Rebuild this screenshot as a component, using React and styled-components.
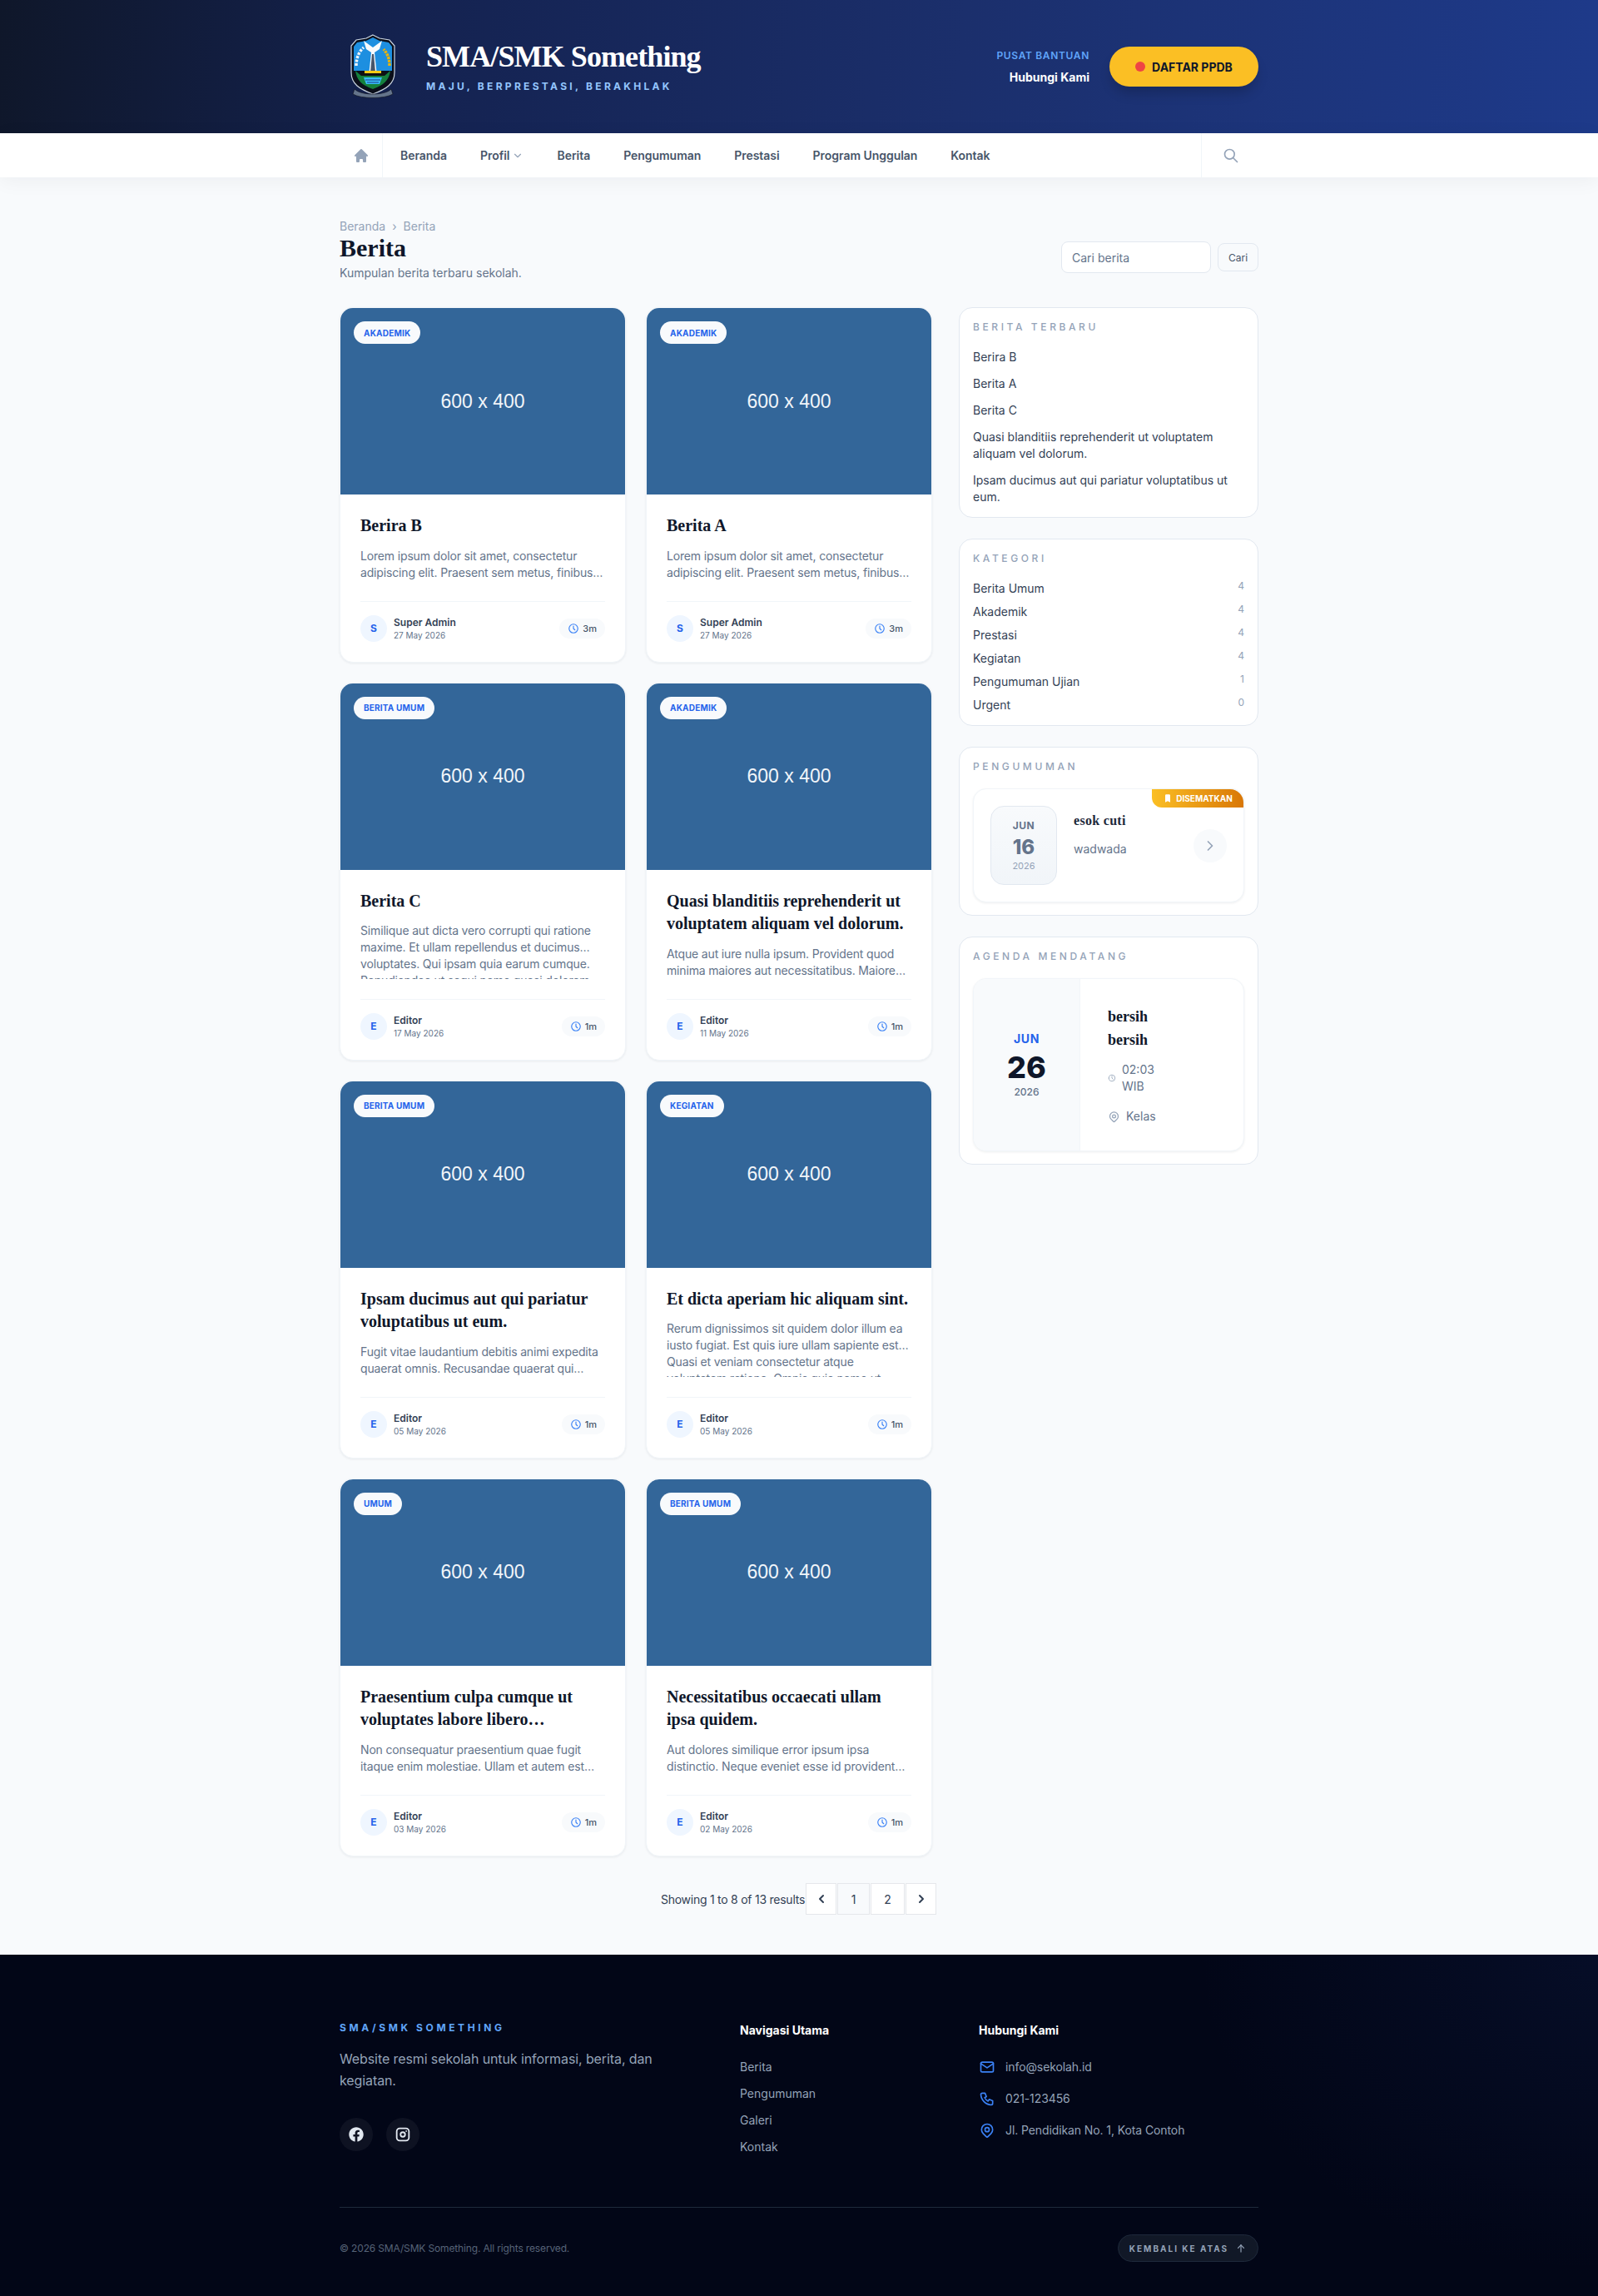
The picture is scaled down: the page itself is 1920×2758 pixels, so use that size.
import React from 'react';
import styled, { createGlobalStyle } from 'styled-components';
import { TbChevronDown, TbChevronLeft, TbChevronRight, TbSearch, TbClock, TbMapPin, TbMail, TbPhone, TbArrowUp, TbBrandInstagram } from 'react-icons/tb';
import { HiHome, HiBookmark } from 'react-icons/hi';
import { FaFacebook } from 'react-icons/fa';

const SANS = '"Inter", "Open Sans", sans-serif';
const SERIF = '"Liberation Serif", "Times New Roman", serif';

const GlobalStyle = createGlobalStyle`
  * { box-sizing: border-box; }
  html, body { margin: 0; padding: 0; }
  body { font-family: ${SANS}; background: #f8fafc; color: #0f172a; }
  a { color: inherit; text-decoration: none; }
`;

const Container = styled.div`
  width: 1104px;
  margin: 0 auto;
`;

/* top banner */
const Banner = styled.header`
  height: 160px;
  background: linear-gradient(95deg, #0f172a 0%, #14224f 25%, #1b2f6c 60%, #1e3a8a 100%);
`;
const BannerInner = styled(Container)`
  height: 100%;
  display: flex;
  align-items: center;
  justify-content: space-between;
`;
const Brand = styled.div`
  display: flex;
  align-items: center;
  gap: 24px;
`;
const LogoBox = styled.div`
  width: 80px;
  height: 80px;
  display: flex;
  align-items: center;
  justify-content: center;
`;
const BrandName = styled.div`
  font-family: ${SERIF};
  font-weight: 700;
  font-size: 36px;
  line-height: 40px;
  color: #fff;
  letter-spacing: -0.9px;
`;
const BrandTag = styled.div`
  margin-top: 8px;
  font-size: 12px;
  line-height: 16px;
  font-weight: 700;
  letter-spacing: 3.3px;
  color: #93c5fd;
`;
const BannerRight = styled.div`
  display: flex;
  align-items: center;
  gap: 24px;
`;
const Help = styled.div`
  text-align: right;
`;
const HelpLabel = styled.div`
  font-size: 12px;
  line-height: 16px;
  font-weight: 600;
  letter-spacing: 0.66px;
  color: #60a5fa;
`;
const HelpLink = styled.div`
  margin-top: 9px;
  font-size: 14px;
  line-height: 18px;
  font-weight: 700;
  color: #fff;
`;
const CtaButton = styled.a`
  height: 48px;
  width: 179px;
  border-radius: 24px;
  background: #fbbf24;
  display: flex;
  align-items: center;
  justify-content: center;
  gap: 8px;
  font-size: 14px;
  font-weight: 700;
  color: #0f172a;
  box-shadow: 0 10px 15px -3px rgba(0, 0, 0, 0.2);
`;
const CtaDot = styled.span`
  width: 12px;
  height: 12px;
  border-radius: 50%;
  background: #ef4444;
`;

/* nav */
const NavBar = styled.nav`
  height: 53px;
  background: #fff;
  position: relative;
  box-shadow: 0 4px 24px rgba(15, 23, 42, 0.05);
`;
const NavInner = styled(Container)`
  height: 100%;
  display: flex;
  align-items: stretch;
`;
const HomeCell = styled.a`
  width: 52px;
  display: flex;
  align-items: center;
  justify-content: center;
  border-right: 1px solid #f1f5f9;
  color: #94a3b8;
  font-size: 20px;
`;
const NavLinks = styled.div`
  flex: 1;
  display: flex;
  align-items: center;
  padding-left: 1px;
`;
const NavLink = styled.a`
  padding: 0 20px;
  display: flex;
  align-items: center;
  gap: 3px;
  font-size: 14px;
  font-weight: 600;
  letter-spacing: -0.04px;
  color: #475569;
  svg { color: #94a3b8; }
`;
const SearchCell = styled.a`
  width: 69px;
  display: flex;
  align-items: center;
  padding-left: 25px;
  border-left: 1px solid #f1f5f9;
  color: #94a3b8;
  font-size: 20px;
`;

/* page */
const Main = styled.main`
  padding: 49px 0 48px;
`;
const PageHead = styled.div`
  display: flex;
  align-items: flex-end;
  justify-content: space-between;
  margin-bottom: 31px;
`;
const Crumbs = styled.div`
  display: flex;
  gap: 8px;
  font-size: 14px;
  line-height: 20px;
  color: #94a3b8;
`;
const PageTitle = styled.h1`
  margin: -2px 0 2px;
  font-family: ${SERIF};
  font-size: 30px;
  line-height: 36px;
  font-weight: 700;
  color: #0f172a;
`;
const PageSub = styled.p`
  margin: 0;
  font-size: 14px;
  line-height: 20px;
  color: #64748b;
`;
const SearchForm = styled.form`
  display: flex;
  align-items: center;
  gap: 8px;
  margin-bottom: 10px;
`;
const SearchInput = styled.input`
  width: 180px;
  height: 38px;
  padding: 0 12px;
  border: 1px solid #e2e8f0;
  border-radius: 8px;
  background: #fff;
  font-family: ${SANS};
  font-size: 14px;
  outline: none;
  &::placeholder { color: #64748b; opacity: 1; }
`;
const SearchButton = styled.button`
  width: 49px;
  height: 34px;
  border: 1px solid #e2e8f0;
  border-radius: 8px;
  background: #f8fafc;
  font-family: ${SANS};
  font-size: 12px;
  color: #475569;
`;
const Columns = styled.div`
  display: grid;
  grid-template-columns: 712px 360px;
  gap: 32px;
  align-items: start;
`;
const CardGrid = styled.div`
  display: grid;
  grid-template-columns: 1fr 1fr;
  gap: 24px;
`;

/* article card */
const Card = styled.article`
  display: flex;
  flex-direction: column;
  background: #fff;
  border: 1px solid #f1f5f9;
  border-radius: 16px;
  overflow: hidden;
  box-shadow: 0 1px 3px rgba(15, 23, 42, 0.07);
`;
const Thumb = styled.div`
  position: relative;
  height: 224px;
  background: #336699;
  display: flex;
  align-items: center;
  justify-content: center;
  font-family: "Liberation Sans", sans-serif;
  font-size: 23px;
  color: #f1f5f9;
`;
const Badge = styled.span`
  position: absolute;
  top: 16px;
  left: 16px;
  height: 27px;
  padding: 0 12px;
  border-radius: 14px;
  background: #f8fafc;
  display: flex;
  align-items: center;
  font-family: ${SANS};
  font-size: 10px;
  font-weight: 700;
  letter-spacing: 0.02em;
  color: #2563eb;
`;
const CardBody = styled.div`
  flex: 1;
  display: flex;
  flex-direction: column;
  padding: 24px;
`;
const CardTitle = styled.h2`
  margin: 0 0 12px;
  font-family: ${SERIF};
  font-size: 20px;
  line-height: 27.5px;
  font-weight: 700;
  color: #0f172a;
`;
const CardText = styled.p`
  flex: 1;
  margin: 0 0 24px;
  font-size: 14px;
  line-height: 20px;
  letter-spacing: -0.16px;
  color: #64748b;
  display: -webkit-box;
  -webkit-box-orient: vertical;
  -webkit-line-clamp: 2;
  overflow: hidden;
`;
const CardFoot = styled.div`
  display: flex;
  align-items: center;
  justify-content: space-between;
  padding-top: 16px;
  border-top: 1px solid #f1f5f9;
`;
const Author = styled.div`
  display: flex;
  align-items: center;
  gap: 8px;
`;
const Avatar = styled.div`
  width: 32px;
  height: 32px;
  border-radius: 50%;
  background: #eff6ff;
  display: flex;
  align-items: center;
  justify-content: center;
  font-size: 12px;
  font-weight: 700;
  color: #2563eb;
`;
const AuthorName = styled.div`
  font-size: 12px;
  line-height: 16px;
  font-weight: 600;
  color: #334155;
`;
const AuthorDate = styled.div`
  font-size: 10px;
  line-height: 14px;
  color: #64748b;
`;
const ReadTime = styled.div`
  height: 24px;
  padding: 0 10px;
  border-radius: 12px;
  background: #f8fafc;
  display: flex;
  align-items: center;
  gap: 4px;
  font-size: 11px;
  font-weight: 500;
  color: #475569;
  svg { color: #3b82f6; font-size: 14px; }
`;

/* pagination */
const PagerRow = styled.div`
  display: flex;
  align-items: center;
  justify-content: center;
  margin-top: 32.5px;
`;
const PagerText = styled.span`
  margin-right: 1px;
  font-size: 14px;
  letter-spacing: -0.25px;
  color: #334155;
`;
const PagerButton = styled.a`
  height: 38px;
  width: ${p => p.$w}px;
  margin-right: 1px;
  border: 1px solid #e5e7eb;
  background: ${p => (p.$current ? '#f8fafc' : '#fff')};
  display: flex;
  align-items: center;
  justify-content: center;
  font-size: 14px;
  color: #334155;
`;

/* sidebar */
const Sidebar = styled.aside`
  display: flex;
  flex-direction: column;
  gap: 25px;
`;
const Panel = styled.section`
  background: #fff;
  border: 1px solid #e2e8f0;
  border-radius: 16px;
  padding: 15px 16px 14px;
`;
const PanelTitle = styled.h3`
  margin: 0 0 18px;
  font-size: 12px;
  line-height: 16px;
  font-weight: 500;
  letter-spacing: 0.3em;
  color: #94a3b8;
`;
const LatestList = styled.div`
  display: flex;
  flex-direction: column;
  gap: 12px;
`;
const LatestItem = styled.a`
  font-size: 14px;
  line-height: 20px;
  color: #334155;
`;
const CategoryList = styled.div`
  display: flex;
  flex-direction: column;
  gap: 8px;
`;
const CategoryRow = styled.a`
  display: flex;
  justify-content: space-between;
  font-size: 14px;
  line-height: 20px;
  color: #334155;
`;
const CategoryCount = styled.span`
  font-size: 12px;
  line-height: 14px;
  color: #94a3b8;
`;
const NoticeCard = styled.div`
  position: relative;
  display: flex;
  align-items: center;
  gap: 20px;
  margin-bottom: 1px;
  padding: 20px;
  border: 1px solid #f1f5f9;
  border-radius: 16px;
  background: #fff;
  box-shadow: 0 1px 3px rgba(15, 23, 42, 0.07);
`;
const PinBadge = styled.span`
  position: absolute;
  top: 0;
  right: 0;
  height: 22px;
  width: 110px;
  display: flex;
  align-items: center;
  justify-content: center;
  gap: 4px;
  border-radius: 0 16px 0 12px;
  background: linear-gradient(90deg, #fbbf24, #d97706);
  font-size: 10px;
  font-weight: 700;
  color: #fff;
`;
const DateTile = styled.div`
  flex: none;
  width: 80px;
  height: 95px;
  border: 1px solid #e2e8f0;
  border-radius: 16px;
  background: linear-gradient(180deg, #f8fafc, #f1f5f9);
  display: flex;
  flex-direction: column;
  align-items: center;
  justify-content: center;
`;
const TileMonth = styled.div`
  font-size: 12px;
  line-height: 16px;
  font-weight: 700;
  letter-spacing: 0.05em;
  color: #64748b;
`;
const TileDay = styled.div`
  margin-top: 3px;
  font-size: 24px;
  line-height: 30px;
  font-weight: 800;
  color: #64748b;
`;
const TileYear = styled.div`
  font-size: 11px;
  line-height: 14px;
  color: #94a3b8;
`;
const NoticeBody = styled.div`
  flex: 1;
  align-self: flex-start;
  padding-top: 6px;
`;
const NoticeTitle = styled.div`
  font-family: ${SERIF};
  font-size: 16px;
  line-height: 24px;
  font-weight: 700;
  letter-spacing: 0.3px;
  color: #1e293b;
`;
const NoticeText = styled.div`
  margin-top: 12px;
  font-size: 14px;
  line-height: 20px;
  color: #64748b;
`;
const RoundArrow = styled.span`
  flex: none;
  width: 40px;
  height: 40px;
  border-radius: 50%;
  background: #f8fafc;
  display: flex;
  align-items: center;
  justify-content: center;
  font-size: 20px;
  color: #94a3b8;
`;
const AgendaCard = styled.div`
  display: flex;
  margin-bottom: 1px;
  border: 1px solid #f1f5f9;
  border-radius: 16px;
  overflow: hidden;
  background: #fff;
  box-shadow: 0 1px 3px rgba(15, 23, 42, 0.07);
`;
const AgendaDate = styled.div`
  flex: none;
  width: 128px;
  background: #f8fafc;
  border-right: 1px solid #f1f5f9;
  display: flex;
  flex-direction: column;
  align-items: center;
  justify-content: center;
`;
const AgendaMonth = styled.div`
  font-size: 14px;
  line-height: 20px;
  font-weight: 700;
  letter-spacing: 0.05em;
  color: #2563eb;
`;
const AgendaDay = styled.div`
  margin-top: 4px;
  font-size: 36px;
  line-height: 40px;
  font-weight: 800;
  color: #0f172a;
`;
const AgendaYear = styled.div`
  margin-top: 1px;
  font-size: 12px;
  line-height: 18px;
  font-weight: 500;
  color: #64748b;
`;
const AgendaBody = styled.div`
  width: 60px;
  margin-left: 33px;
  padding: 32px 0 31px;
`;
const AgendaTitle = styled.div`
  font-family: ${SERIF};
  font-size: 18px;
  line-height: 27.5px;
  font-weight: 700;
  color: #0f172a;
`;
const AgendaMeta = styled.div`
  margin-top: ${p => p.$top}px;
  display: flex;
  align-items: center;
  gap: ${p => p.$gap}px;
  font-size: 14px;
  line-height: 20px;
  color: #64748b;
  svg { flex: none; color: #94a3b8; font-size: ${p => p.$icon}px; }
`;

/* footer */
const Footer = styled.footer`
  height: 410px;
  background:
    radial-gradient(ellipse 480px 380px at 100% 0%, rgba(30, 58, 138, 0.14), transparent 100%),
    #020617;
  padding-top: 80px;
`;
const FooterGrid = styled.div`
  display: grid;
  grid-template-columns: 481px 287px 1fr;
  height: 224px;
  border-bottom: 1px solid #1e293b;
`;
const FooterBrand = styled.div`
  font-size: 12px;
  line-height: 16px;
  font-weight: 700;
  letter-spacing: 0.3em;
  color: #60a5fa;
`;
const FooterText = styled.p`
  margin: 16px 0 0;
  width: 400px;
  font-size: 16px;
  line-height: 26px;
  letter-spacing: -0.1px;
  color: #94a3b8;
`;
const Socials = styled.div`
  display: flex;
  gap: 16px;
  margin-top: 32px;
`;
const SocialLink = styled.a`
  width: 40px;
  height: 40px;
  border-radius: 50%;
  background: rgba(255, 255, 255, 0.05);
  display: flex;
  align-items: center;
  justify-content: center;
  font-size: ${p => p.$size}px;
  color: #e2e8f0;
`;
const FooterHead = styled.h4`
  margin: 1px 0 24px;
  font-size: 14px;
  line-height: 20px;
  font-weight: 700;
  color: #fff;
`;
const FooterLinks = styled.div`
  display: flex;
  flex-direction: column;
  gap: 12px;
`;
const FooterLink = styled.a`
  font-size: 14px;
  line-height: 20px;
  color: #94a3b8;
`;
const ContactList = styled.div`
  display: flex;
  flex-direction: column;
  gap: 18px;
`;
const ContactRow = styled.div`
  display: flex;
  align-items: center;
  gap: 12px;
  font-size: 14px;
  line-height: 20px;
  letter-spacing: -0.1px;
  color: #94a3b8;
  svg { color: #3b82f6; font-size: 20px; flex: none; }
`;
const FooterBottom = styled.div`
  display: flex;
  align-items: center;
  justify-content: space-between;
  margin-top: 32px;
`;
const Copyright = styled.div`
  font-size: 12px;
  letter-spacing: -0.15px;
  color: #566377;
`;
const TopButton = styled.a`
  width: 169px;
  height: 33px;
  border: 1px solid #1e293b;
  border-radius: 17px;
  background: #111827;
  display: flex;
  align-items: center;
  justify-content: center;
  gap: 8px;
  font-size: 10px;
  font-weight: 700;
  letter-spacing: 0.2em;
  color: #94a3b8;
  svg { font-size: 14px; }
`;

function Crest() {
  return (
    <svg width="56" height="78" viewBox="0 0 56 78">
      <path d="M28 1 L36 5 L48 7 L54 14 L54 46 C54 60 44 66 28 72 C12 66 2 60 2 46 L2 14 L8 7 L20 5 Z" fill="#0b0f1a" stroke="#cbd5e1" strokeWidth="1.2" />
      <path d="M28 4 L36 8 L47 10 L51 15 L51 44 L5 44 L5 15 L9 10 L20 8 Z" fill="#1d8fe0" />
      <path d="M17 8 L28 16 L39 8 L36 18 L30 22 L33 50 L23 50 L26 22 L20 18 Z" fill="#f8fafc" />
      <path d="M27 24 L29 24 L31 46 L25 46 Z" fill="#475569" />
      <path d="M16 44 L40 44 L43 50 L13 50 Z" fill="#111" />
      <path d="M18 44 L38 44 L38 47 L18 47 Z" fill="#facc15" />
      <path d="M8 38 C8 28 12 20 17 16" fill="none" stroke="#f1f5f9" strokeWidth="3.5" strokeDasharray="3 1.5" />
      <path d="M48 38 C48 30 46 24 41 18" fill="none" stroke="#eab308" strokeWidth="3.5" strokeDasharray="3 1" />
      <path d="M7 44 C9 58 18 62 28 66 C38 62 47 58 49 44 L42 50 L14 50 Z" fill="#15803d" />
      <path d="M17 52 L39 52 L36 60 L20 60 Z" fill="#38bdf8" />
      <path d="M19 55 H37 M21 58 H35" stroke="#1e3a8a" strokeWidth="1" />
      <path d="M6 66 C14 74 42 74 50 66 L52 72 C42 78 14 78 4 72 Z" fill="#64748b" stroke="#0b0f1a" strokeWidth="0.6" />
    </svg>
  );
}

const ARTICLES = [
  { badge: 'AKADEMIK', title: 'Berira B', text: 'Lorem ipsum dolor sit amet, consectetur adipiscing elit. Praesent sem metus, finibus at vestibulum sit amet, dictum nec lacus. Sed non lorem nunc.', initial: 'S', author: 'Super Admin', date: '27 May 2026', read: '3m' },
  { badge: 'AKADEMIK', title: 'Berita A', text: 'Lorem ipsum dolor sit amet, consectetur adipiscing elit. Praesent sem metus, finibus at vestibulum sit amet, dictum nec lacus. Sed non lorem nunc.', initial: 'S', author: 'Super Admin', date: '27 May 2026', read: '3m' },
  { badge: 'BERITA UMUM', title: 'Berita C', text: 'Similique aut dicta vero corrupti qui ratione maxime. Et ullam repellendus et ducimus voluptates. Qui ipsam quia earum cumque. Repudiandae ut sequi nemo quasi dolorem sint.', initial: 'E', author: 'Editor', date: '17 May 2026', read: '1m' },
  { badge: 'AKADEMIK', title: 'Quasi blanditiis reprehenderit ut voluptatem aliquam vel dolorum.', text: 'Atque aut iure nulla ipsum. Provident quod minima maiores aut necessitatibus. Maiores sit vel quia molestias dolorem quis et.', initial: 'E', author: 'Editor', date: '11 May 2026', read: '1m' },
  { badge: 'BERITA UMUM', title: 'Ipsam ducimus aut qui pariatur voluptatibus ut eum.', text: 'Fugit vitae laudantium debitis animi expedita quaerat omnis. Recusandae quaerat qui voluptatem dolores nobis sit at.', initial: 'E', author: 'Editor', date: '05 May 2026', read: '1m' },
  { badge: 'KEGIATAN', title: 'Et dicta aperiam hic aliquam sint.', text: 'Rerum dignissimos sit quidem dolor illum ea iusto fugiat. Est quis iure ullam sapiente est. Quasi et veniam consectetur atque voluptatem ratione. Omnis quia nemo ut.', initial: 'E', author: 'Editor', date: '05 May 2026', read: '1m' },
  { badge: 'UMUM', title: 'Praesentium culpa cumque ut voluptates labore libero…', text: 'Non consequatur praesentium quae fugit itaque enim molestiae. Ullam et autem est quia deserunt sint non aut.', initial: 'E', author: 'Editor', date: '03 May 2026', read: '1m' },
  { badge: 'BERITA UMUM', title: 'Necessitatibus occaecati ullam ipsa quidem.', text: 'Aut dolores similique error ipsum ipsa distinctio. Neque eveniet esse id provident nihil ut soluta quam.', initial: 'E', author: 'Editor', date: '02 May 2026', read: '1m' },
];

const NAV = ['Berita', 'Pengumuman', 'Prestasi', 'Program Unggulan', 'Kontak'];
const LATEST = ['Berira B', 'Berita A', 'Berita C', 'Quasi blanditiis reprehenderit ut voluptatem aliquam vel dolorum.', 'Ipsam ducimus aut qui pariatur voluptatibus ut eum.'];
const CATEGORIES = [['Berita Umum', 4], ['Akademik', 4], ['Prestasi', 4], ['Kegiatan', 4], ['Pengumuman Ujian', 1], ['Urgent', 0]];

export default function App() {
  return (
    <>
      <GlobalStyle />
      <Banner>
        <BannerInner>
          <Brand>
            <LogoBox><Crest /></LogoBox>
            <div>
              <BrandName>SMA/SMK Something</BrandName>
              <BrandTag>MAJU, BERPRESTASI, BERAKHLAK</BrandTag>
            </div>
          </Brand>
          <BannerRight>
            <Help>
              <HelpLabel>PUSAT BANTUAN</HelpLabel>
              <HelpLink>Hubungi Kami</HelpLink>
            </Help>
            <CtaButton><CtaDot />DAFTAR PPDB</CtaButton>
          </BannerRight>
        </BannerInner>
      </Banner>

      <NavBar>
        <NavInner>
          <HomeCell><HiHome /></HomeCell>
          <NavLinks>
            <NavLink>Beranda</NavLink>
            <NavLink>Profil <TbChevronDown size={14} /></NavLink>
            {NAV.map(n => <NavLink key={n}>{n}</NavLink>)}
          </NavLinks>
          <SearchCell><TbSearch /></SearchCell>
        </NavInner>
      </NavBar>

      <Main>
        <Container>
          <PageHead>
            <div>
              <Crumbs><span>Beranda</span><span>›</span><span>Berita</span></Crumbs>
              <PageTitle>Berita</PageTitle>
              <PageSub>Kumpulan berita terbaru sekolah.</PageSub>
            </div>
            <SearchForm onSubmit={e => e.preventDefault()}>
              <SearchInput placeholder="Cari berita" />
              <SearchButton>Cari</SearchButton>
            </SearchForm>
          </PageHead>

          <Columns>
            <CardGrid>
              {ARTICLES.map(a => (
                <Card key={a.title}>
                  <Thumb>
                    600 x 400
                    <Badge>{a.badge}</Badge>
                  </Thumb>
                  <CardBody>
                    <CardTitle>{a.title}</CardTitle>
                    <CardText>{a.text}</CardText>
                    <CardFoot>
                      <Author>
                        <Avatar>{a.initial}</Avatar>
                        <div>
                          <AuthorName>{a.author}</AuthorName>
                          <AuthorDate>{a.date}</AuthorDate>
                        </div>
                      </Author>
                      <ReadTime><TbClock />{a.read}</ReadTime>
                    </CardFoot>
                  </CardBody>
                </Card>
              ))}
            </CardGrid>

            <Sidebar>
              <Panel>
                <PanelTitle>BERITA TERBARU</PanelTitle>
                <LatestList>
                  {LATEST.map(t => <LatestItem key={t}>{t}</LatestItem>)}
                </LatestList>
              </Panel>
              <Panel>
                <PanelTitle>KATEGORI</PanelTitle>
                <CategoryList>
                  {CATEGORIES.map(([name, count]) => (
                    <CategoryRow key={name}>
                      <span>{name}</span>
                      <CategoryCount>{count}</CategoryCount>
                    </CategoryRow>
                  ))}
                </CategoryList>
              </Panel>
              <Panel>
                <PanelTitle>PENGUMUMAN</PanelTitle>
                <NoticeCard>
                  <PinBadge><HiBookmark size={12} />DISEMATKAN</PinBadge>
                  <DateTile>
                    <TileMonth>JUN</TileMonth>
                    <TileDay>16</TileDay>
                    <TileYear>2026</TileYear>
                  </DateTile>
                  <NoticeBody>
                    <NoticeTitle>esok cuti</NoticeTitle>
                    <NoticeText>wadwada</NoticeText>
                  </NoticeBody>
                  <RoundArrow><TbChevronRight /></RoundArrow>
                </NoticeCard>
              </Panel>
              <Panel>
                <PanelTitle>AGENDA MENDATANG</PanelTitle>
                <AgendaCard>
                  <AgendaDate>
                    <AgendaMonth>JUN</AgendaMonth>
                    <AgendaDay>26</AgendaDay>
                    <AgendaYear>2026</AgendaYear>
                  </AgendaDate>
                  <AgendaBody>
                    <AgendaTitle>bersih bersih</AgendaTitle>
                    <AgendaMeta $top={12} $gap={7} $icon={10}><TbClock /><span>02:03 WIB</span></AgendaMeta>
                    <AgendaMeta $top={16} $gap={7} $icon={15}><TbMapPin /><span>Kelas</span></AgendaMeta>
                  </AgendaBody>
                </AgendaCard>
              </Panel>
            </Sidebar>
          </Columns>

          <PagerRow>
            <PagerText>Showing 1 to 8 of 13 results</PagerText>
            <PagerButton $w={37}><TbChevronLeft size={16} strokeWidth={3} /></PagerButton>
            <PagerButton $w={39} $current>1</PagerButton>
            <PagerButton $w={41}>2</PagerButton>
            <PagerButton $w={37}><TbChevronRight size={16} strokeWidth={3} /></PagerButton>
          </PagerRow>
        </Container>
      </Main>

      <Footer>
        <Container>
          <FooterGrid>
            <div>
              <FooterBrand>SMA/SMK SOMETHING</FooterBrand>
              <FooterText>Website resmi sekolah untuk informasi, berita, dan kegiatan.</FooterText>
              <Socials>
                <SocialLink $size={18}><FaFacebook /></SocialLink>
                <SocialLink $size={22}><TbBrandInstagram /></SocialLink>
              </Socials>
            </div>
            <div>
              <FooterHead>Navigasi Utama</FooterHead>
              <FooterLinks>
                {['Berita', 'Pengumuman', 'Galeri', 'Kontak'].map(l => <FooterLink key={l}>{l}</FooterLink>)}
              </FooterLinks>
            </div>
            <div>
              <FooterHead>Hubungi Kami</FooterHead>
              <ContactList>
                <ContactRow><TbMail />info@sekolah.id</ContactRow>
                <ContactRow><TbPhone />021-123456</ContactRow>
                <ContactRow><TbMapPin />Jl. Pendidikan No. 1, Kota Contoh</ContactRow>
              </ContactList>
            </div>
          </FooterGrid>
          <FooterBottom>
            <Copyright>© 2026 SMA/SMK Something. All rights reserved.</Copyright>
            <TopButton>KEMBALI KE ATAS <TbArrowUp /></TopButton>
          </FooterBottom>
        </Container>
      </Footer>
    </>
  );
}
